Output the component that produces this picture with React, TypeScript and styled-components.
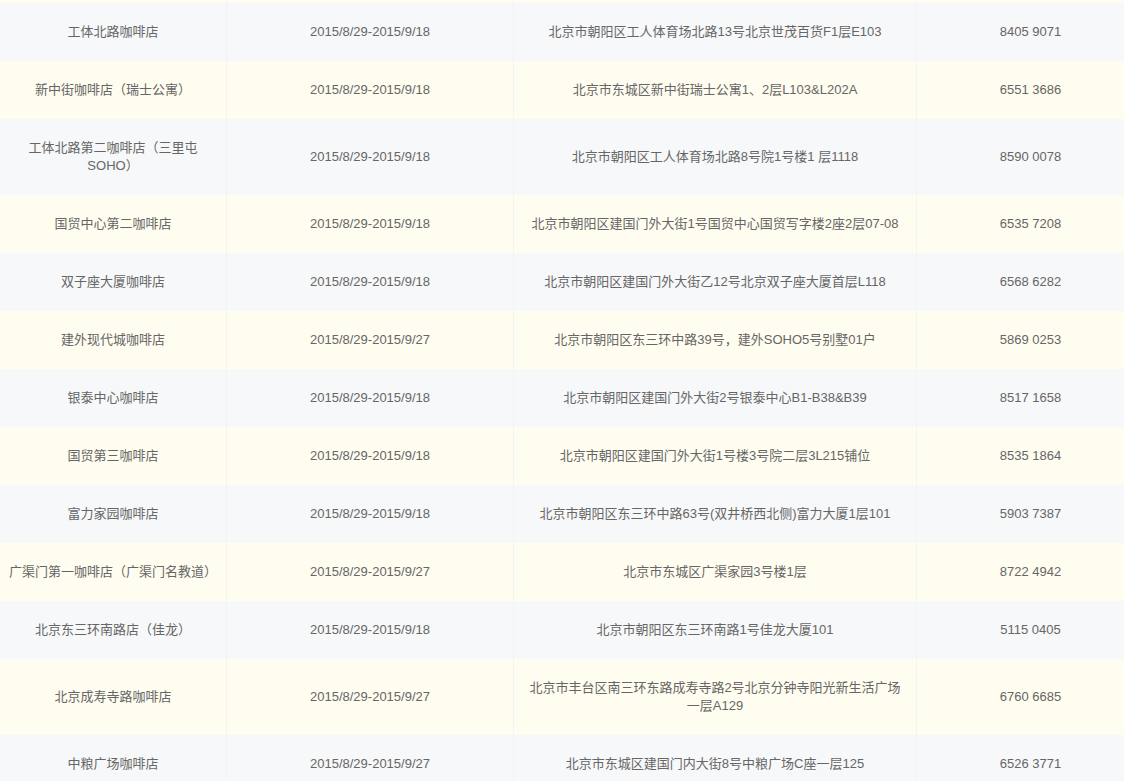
import React from "react";
import styled, { createGlobalStyle } from "styled-components";

const Global = createGlobalStyle`
  html, body {
    margin: 0;
    padding: 0;
    background: #ffffff;
    overflow: hidden;
  }
  body {
    font-family: "Liberation Sans", "Noto Sans CJK SC", sans-serif;
  }
`;

const Table = styled.div`
  width: 1144px;
  display: flex;
  flex-direction: column;
  font-size: 13px;
  line-height: 18px;
  color: #666666;
`;

const Row = styled.div<{ $tone: "gray" | "cream" }>`
  display: grid;
  grid-template-columns: 226px 287px 403px 228px;
  background: ${(p) => (p.$tone === "gray" ? "#f7f8f9" : "#fffdf0")};
`;

const Cell = styled.div<{ $pad: number; $stub?: boolean }>`
  display: flex;
  align-items: center;
  justify-content: center;
  text-align: center;
  padding: ${(p) => (p.$stub ? "0" : `20px ${p.$pad}px`)};
  height: ${(p) => (p.$stub ? "3px" : "auto")};
  box-sizing: border-box;
  & + & {
    border-left: 1px solid #f3f4f5;
  }
`;

type Item = [string, string, string, string];

const A = "2015/8/29-2015/9/18";
const B = "2015/8/29-2015/9/27";

const rows: Item[] = [
  ["工体北路咖啡店", A, "北京市朝阳区工人体育场北路13号北京世茂百货F1层E103", "8405 9071"],
  ["新中街咖啡店（瑞士公寓）", A, "北京市东城区新中街瑞士公寓1、2层L103&L202A", "6551 3686"],
  ["工体北路第二咖啡店（三里屯SOHO）", A, "北京市朝阳区工人体育场北路8号院1号楼1 层1118", "8590 0078"],
  ["国贸中心第二咖啡店", A, "北京市朝阳区建国门外大街1号国贸中心国贸写字楼2座2层07-08", "6535 7208"],
  ["双子座大厦咖啡店", A, "北京市朝阳区建国门外大街乙12号北京双子座大厦首层L118", "6568 6282"],
  ["建外现代城咖啡店", B, "北京市朝阳区东三环中路39号，建外SOHO5号别墅01户", "5869 0253"],
  ["银泰中心咖啡店", A, "北京市朝阳区建国门外大街2号银泰中心B1-B38&B39", "8517 1658"],
  ["国贸第三咖啡店", A, "北京市朝阳区建国门外大街1号楼3号院二层3L215铺位", "8535 1864"],
  ["富力家园咖啡店", A, "北京市朝阳区东三环中路63号(双井桥西北侧)富力大厦1层101", "5903 7387"],
  ["广渠门第一咖啡店（广渠门名教道）", B, "北京市东城区广渠家园3号楼1层", "8722 4942"],
  ["北京东三环南路店（佳龙）", A, "北京市朝阳区东三环南路1号佳龙大厦101", "5115 0405"],
  ["北京成寿寺路咖啡店", B, "北京市丰台区南三环东路成寿寺路2号北京分钟寺阳光新生活广场一层A129", "6760 6685"],
  ["中粮广场咖啡店", B, "北京市东城区建国门内大街8号中粮广场C座一层125", "6526 3771"],
];

const pads = [8, 8, 12, 8];

export default function App() {
  return (
    <>
      <Global />
      <Table>
        <Row $tone="cream">
          {pads.map((p, i) => (
            <Cell key={i} $pad={p} $stub />
          ))}
        </Row>
        {rows.map((r, i) => (
          <Row key={i} $tone={i % 2 === 0 ? "gray" : "cream"}>
            {r.map((t, j) => (
              <Cell key={j} $pad={pads[j]}>
                {t}
              </Cell>
            ))}
          </Row>
        ))}
      </Table>
    </>
  );
}
